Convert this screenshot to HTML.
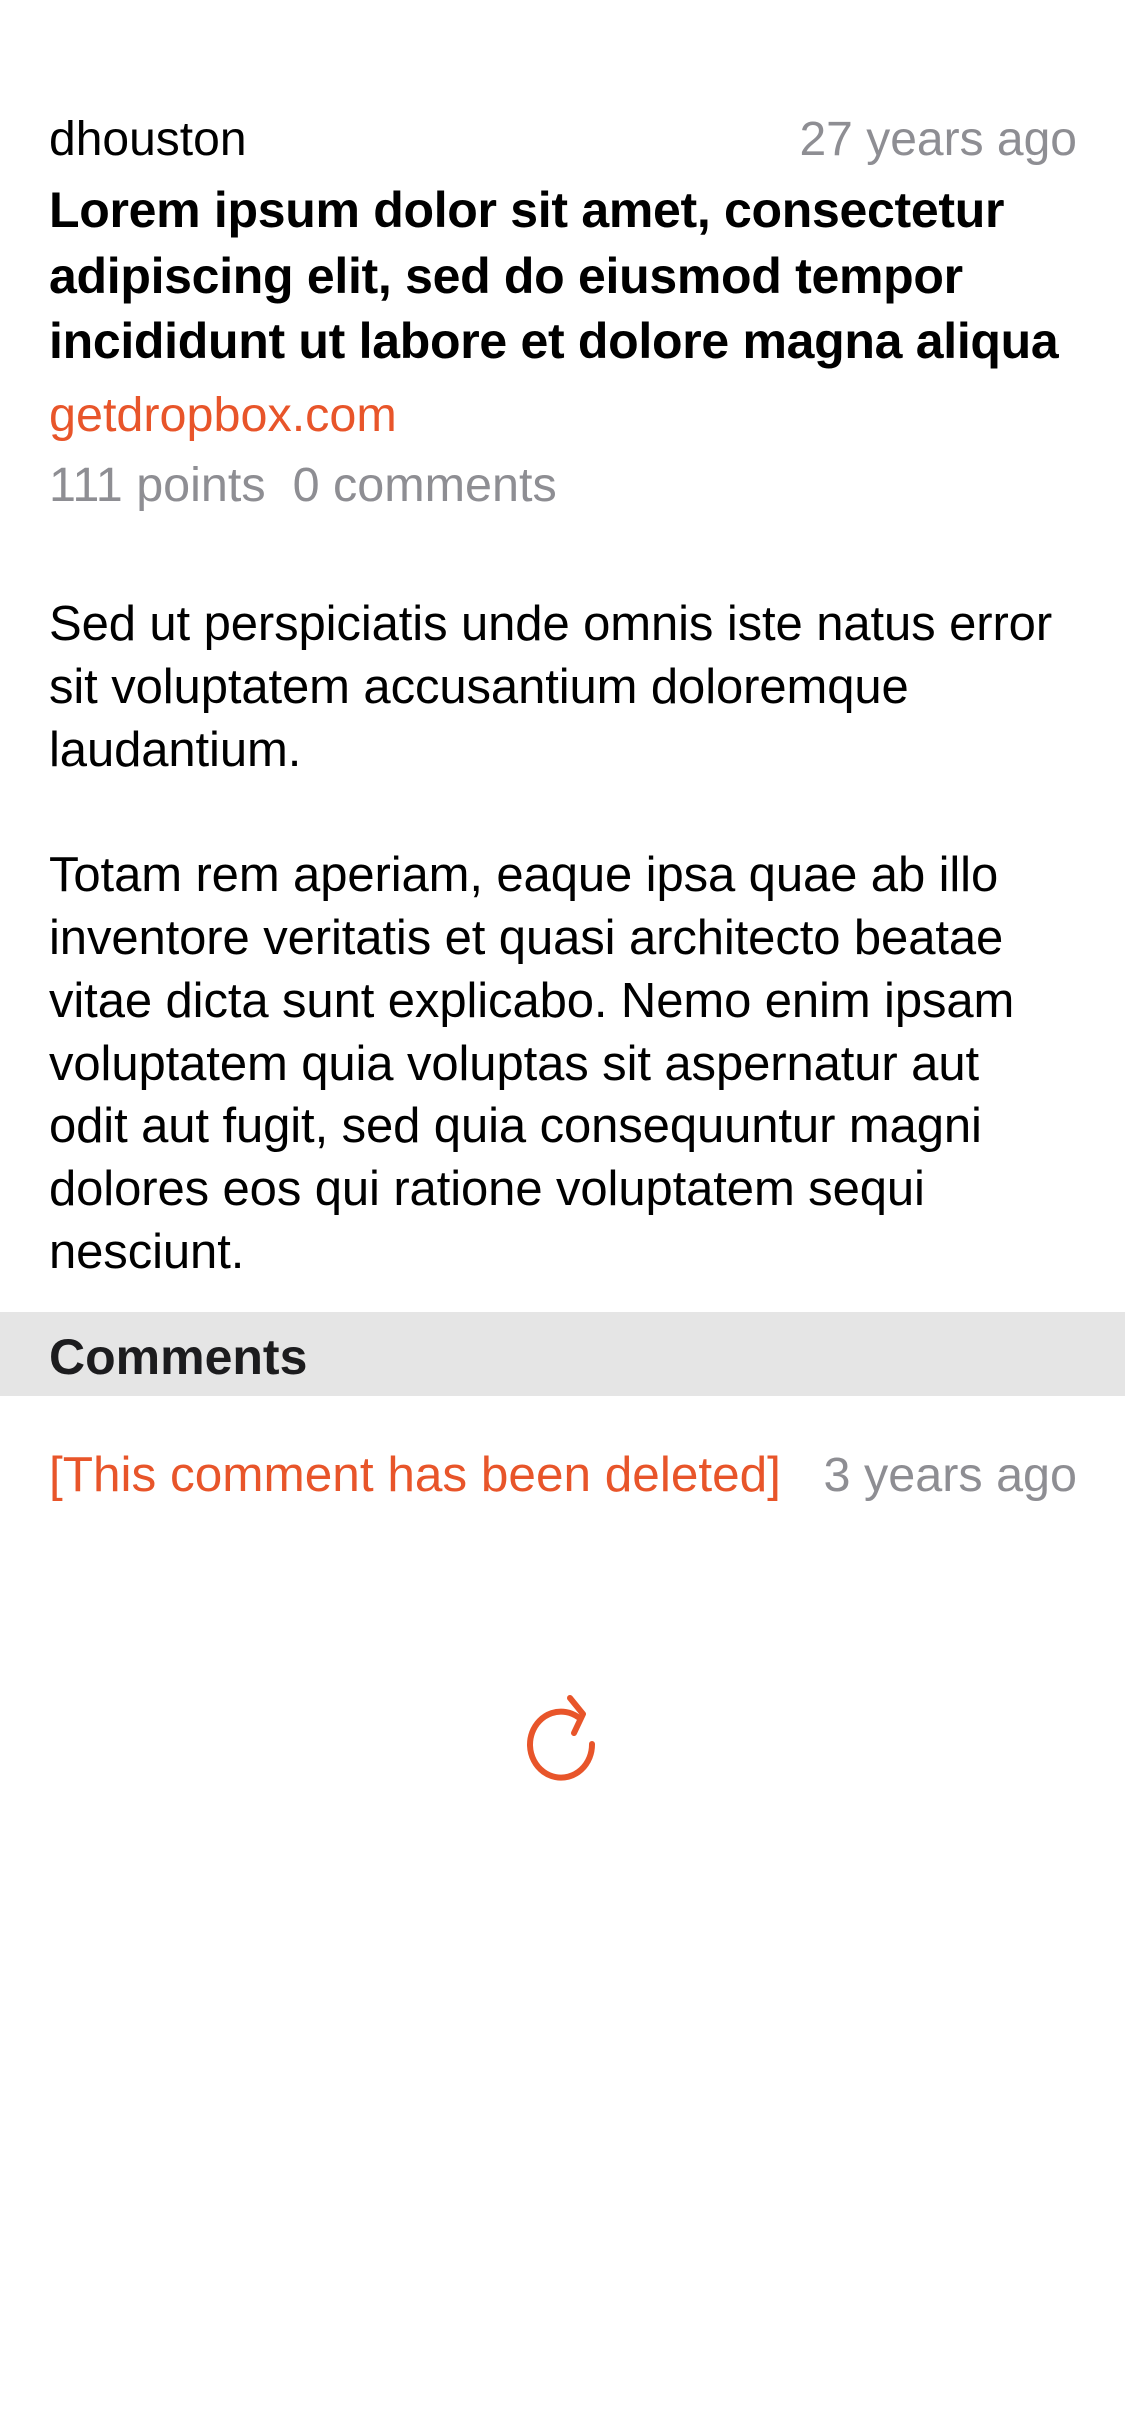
<!DOCTYPE html>
<html><head><meta charset="utf-8"><style>
html,body{margin:0;padding:0;background:#fff;width:1125px;height:2436px;overflow:hidden;font-family:"Liberation Sans",sans-serif;}
.a{position:absolute;white-space:nowrap;}
.g{color:#8e8e93;}
.o{color:#e8552a;}
</style></head><body>
<div class="a" style="left:49px;top:110px;font-size:48px;line-height:60px;color:#000">dhouston</div>
<div class="a g" style="right:48px;top:110px;font-size:48px;line-height:60px">27 years ago</div>
<div class="a" style="left:49px;top:178px;font-size:50px;font-weight:bold;line-height:65.5px;color:#000;letter-spacing:-0.3px">Lorem ipsum dolor sit amet, consectetur<br>adipiscing elit, sed do eiusmod tempor<br>incididunt ut labore et dolore magna aliqua</div>
<div class="a o" style="left:49px;top:385px;font-size:48.5px;line-height:60px">getdropbox.com</div>
<div class="a g" style="left:49px;top:455px;font-size:48.5px;line-height:60px">111 points&nbsp; 0 comments</div>
<div class="a" style="left:49px;top:593px;font-size:49px;line-height:62.8px;color:#000;letter-spacing:-0.1px">Sed ut perspiciatis unde omnis iste natus error<br>sit voluptatem accusantium doloremque<br>laudantium.<br><br>Totam rem aperiam, eaque ipsa quae ab illo<br>inventore veritatis et quasi architecto beatae<br>vitae dicta sunt explicabo. Nemo enim ipsam<br>voluptatem quia voluptas sit aspernatur aut<br>odit aut fugit, sed quia consequuntur magni<br>dolores eos qui ratione voluptatem sequi<br>nesciunt.</div>
<div class="a" style="left:0;top:1312px;width:1125px;height:84px;background:#e5e5e5"></div>
<div class="a" style="left:49px;top:1327px;font-size:50px;line-height:60px;font-weight:bold;color:#1c1c1e">Comments</div>
<div class="a o" style="left:49px;top:1445px;font-size:49.5px;line-height:60px">[This comment has been deleted]</div>
<div class="a g" style="right:48px;top:1445px;font-size:48.5px;line-height:60px">3 years ago</div>
<svg class="a" style="left:522px;top:1690px" width="82" height="95" viewBox="0 0 82 95">
<path d="M70 54 A31 33 0 1 1 56 27" fill="none" stroke="#e8552a" stroke-width="6" stroke-linecap="round"/>
<path d="M48 8 L61 24 L52 43" fill="none" stroke="#e8552a" stroke-width="6" stroke-linecap="round" stroke-linejoin="round"/>
</svg>
</body></html>
